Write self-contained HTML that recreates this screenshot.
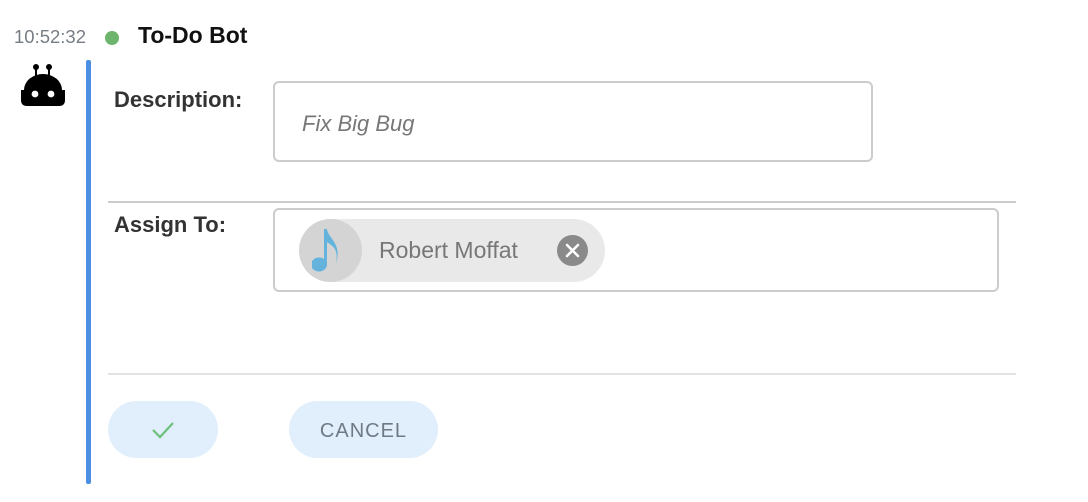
<!DOCTYPE html>
<html><head><style>
body{margin:0;width:1088px;height:502px;background:#fff;font-family:"Liberation Sans",sans-serif;position:relative;overflow:hidden}
.a{position:absolute}
</style></head><body>
<div class="a" style="left:14px;top:26px;font-size:18.5px;color:#777d85">10:52:32</div>
<div class="a" style="left:105px;top:31px;width:14px;height:14px;border-radius:50%;background:#6db56d"></div>
<div class="a" style="left:138px;top:22px;font-size:23px;font-weight:bold;color:#111">To-Do Bot</div>
<svg class="a" style="left:18px;top:62px" width="50" height="46" viewBox="0 0 50 46">
<circle cx="18" cy="5" r="3"/><circle cx="31" cy="5" r="3"/>
<rect x="17" y="5" width="2" height="12"/><rect x="30" y="5" width="2" height="12"/>
<path d="M6 28 A19 16 0 0 1 44 28 L47 28 L47 38 Q47 44 41 44 L9 44 Q3 44 3 38 L3 28 Z"/>
<circle cx="17" cy="32" r="3.4" fill="#fff"/><circle cx="33" cy="32" r="3.4" fill="#fff"/>
</svg>
<div class="a" style="left:86px;top:60px;width:5px;height:424px;background:#4a8fe0;border-radius:2px"></div>
<div class="a" style="left:114px;top:87px;font-size:22px;font-weight:bold;color:#333">Description:</div>
<div class="a" style="left:273px;top:81px;width:596px;height:77px;border:2px solid #ccc;border-radius:6px"></div>
<div class="a" style="left:302px;top:111px;font-size:22px;font-style:italic;color:#777">Fix Big Bug</div>
<div class="a" style="left:108px;top:201px;width:908px;height:2px;background:#ccc"></div>
<div class="a" style="left:114px;top:212px;font-size:22px;font-weight:bold;color:#333">Assign To:</div>
<div class="a" style="left:273px;top:208px;width:722px;height:80px;border:2px solid #ccc;border-radius:6px"></div>
<div class="a" style="left:299px;top:219px;width:306px;height:63px;border-radius:32px;background:#e9e9e9"></div>
<div class="a" style="left:299px;top:219px;width:63px;height:63px;border-radius:50%;background:#d4d4d4"></div>
<svg class="a" style="left:312px;top:226px" width="36" height="50" viewBox="0 0 36 50">
<path d="M15 3 L15 38 A8 7 0 1 1 12 33 L12 3 Z" fill="#63b3dd"/>
<path d="M15 4 C18 14 30 18 24 38 C27 22 20 20 15 16 Z" fill="#63b3dd"/>
</svg>
<div class="a" style="left:379px;top:237px;font-size:23px;color:#777">Robert Moffat</div>
<div class="a" style="left:557px;top:235px;width:31px;height:31px;border-radius:50%;background:#8a8a8a"></div>
<svg class="a" style="left:557px;top:235px" width="31" height="31"><path d="M10 10 L21 21 M21 10 L10 21" stroke="#fff" stroke-width="2.5" stroke-linecap="round"/></svg>
<div class="a" style="left:108px;top:373px;width:908px;height:2px;background:#e2e2e2"></div>
<div class="a" style="left:108px;top:401px;width:110px;height:57px;border-radius:29px;background:#e1eefb"></div>
<svg class="a" style="left:150px;top:419px" width="26" height="22"><path d="M3 11 L10 18 L23 4" stroke="#6cc17a" stroke-width="2.2" fill="none"/></svg>
<div class="a" style="left:289px;top:401px;width:149px;height:57px;border-radius:29px;background:#e1eefb"></div>
<div class="a" style="left:289px;top:420px;width:149px;text-align:center;font-size:20px;letter-spacing:1px;color:#6f7a85">CANCEL</div>
</body></html>
